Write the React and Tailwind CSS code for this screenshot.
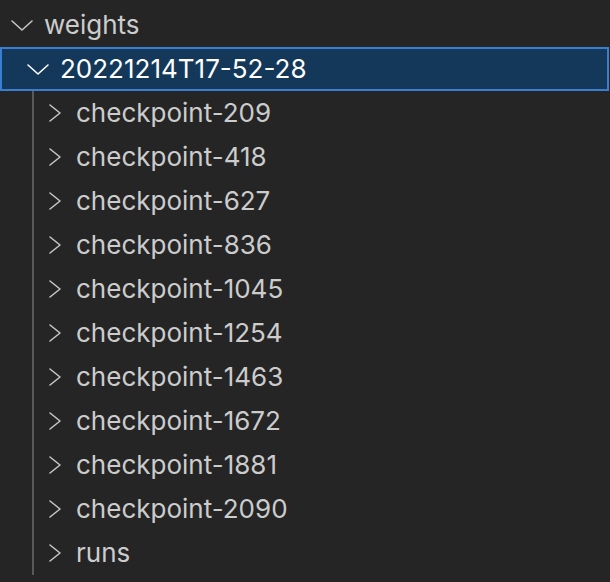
const checkpoints = [209, 418, 627, 836, 1045, 1254, 1463, 1672, 1881, 2090];

function Chevron({ open, selected }) {
  return (
    <svg
      width="32"
      height="32"
      viewBox="0 0 32 32"
      fill="none"
      stroke={selected ? "#ffffff" : "#c5c5c5"}
      strokeWidth="1.6"
      strokeLinecap="round"
      strokeLinejoin="round"
      className="shrink-0"
    >
      {open ? <polyline points="6,12 16,21 26,12" /> : <polyline points="11,8 21,16 11,24" />}
    </svg>
  );
}

function Row({ label, open, selected, indent, gap }) {
  return (
    <div
      className={
        "flex h-[44px] items-center " +
        (selected ? "border-2 border-[#3a7fcf] bg-[#143859] text-white" : "border-2 border-transparent text-[#cccccc]")
      }
    >
      <div className={indent}>
        <Chevron open={open} selected={selected} />
      </div>
      <span className={gap + " text-[26px] leading-none"}>{label}</span>
    </div>
  );
}

export default function App() {
  return (
    <div className="h-[582px] w-[610px] overflow-hidden bg-[#252526] pt-[3px] pr-[1px] font-['Inter',sans-serif]">
      <Row label="weights" open indent="pl-[4px]" gap="pl-[6px]" />
      <Row label="20221214T17-52-28" open selected indent="pl-[20px]" gap="pl-[6px]" />
      <div className="ml-[32px] border-l-2 border-[#585858]">
        {checkpoints.map((n) => (
          <Row key={n} label={"checkpoint-" + n} indent="pl-[3px]" gap="pl-[5px]" />
        ))}
        <Row label="runs" indent="pl-[3px]" gap="pl-[5px]" />
      </div>
    </div>
  );
}
